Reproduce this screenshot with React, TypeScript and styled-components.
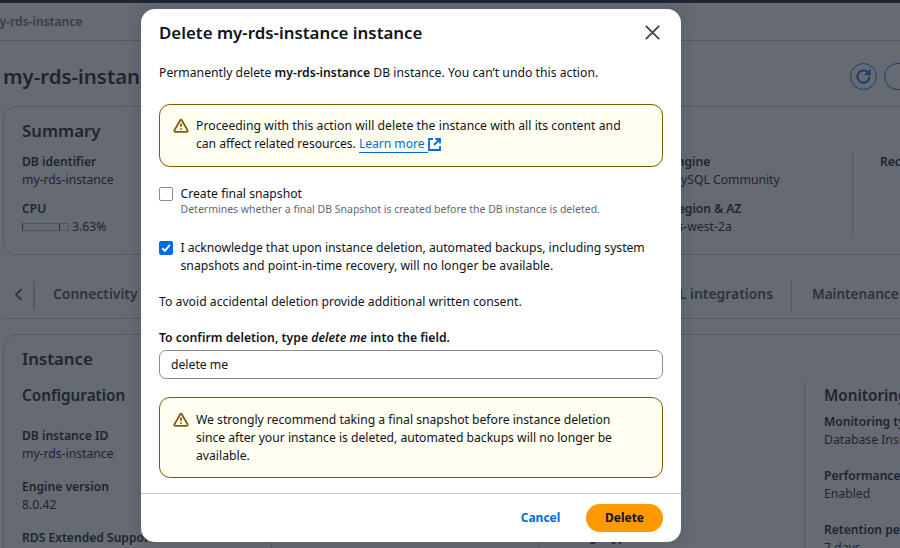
import React from "react";
import styled, { createGlobalStyle } from "styled-components";

const ink = "#0f141a";
const line = "#c6c6cd";
const blue = "#006ce0";

const GlobalStyle = createGlobalStyle`
  * { box-sizing: border-box; }
  body { margin: 0; overflow: hidden; background: #fff; }
  #root { height: 548px; }
`;

const Screen = styled.div`
  position: relative;
  width: 900px;
  height: 548px;
  overflow: hidden;
  background: #fff;
  color: ${ink};
  font: 400 12.2px/18px "Noto Sans", "Open Sans", sans-serif;
`;

/* Console page */

const Page = styled.div`
  height: 548px;
  overflow: hidden;
  white-space: nowrap;
`;

const TopBar = styled.div`
  height: 3px;
  background: #161d26;
`;

const Breadcrumbs = styled.nav`
  display: flex;
  align-items: center;
  height: 38px;
  padding-left: 3px;
  border-bottom: 1px solid ${line};
  color: #656871;
  font-size: 12.1px;
  font-weight: 600;
`;

const Crumb = styled.span`
  margin-left: -15px;
`;

const TitleRow = styled.header`
  display: flex;
  align-items: center;
  height: 65px;
  padding: 6px 0 0 3px;
`;

const PageTitle = styled.h1`
  flex: none;
  width: 847px;
  margin: 0 0 2px;
  font-size: 20.4px;
  line-height: 26px;
  font-weight: 600;
`;

const RoundButton = styled.button<{ $wide?: boolean }>`
  display: flex;
  flex: none;
  align-items: center;
  justify-content: center;
  width: ${(p) => (p.$wide ? "90px" : "27px")};
  height: 27px;
  margin-right: 7px;
  padding: 0;
  border: 1.4px solid ${blue};
  border-radius: 14px;
  background: transparent;
  color: ${blue};
`;

const Card = styled.section<{ $height: number }>`
  width: 1090px;
  height: ${(p) => p.$height}px;
  margin-left: 3px;
  padding: 13px 0 0 18px;
  border: 1px solid ${line};
  border-radius: 14px;
`;

const CardTitle = styled.h2`
  margin: 0;
  font-size: 16.8px;
  line-height: 22px;
  font-weight: 600;
`;

const SummaryGrid = styled.div`
  display: grid;
  grid-template-columns: 648px 182px 200px;
  margin-top: 10px;
`;

const SummaryColumn = styled.div<{ $ruled?: boolean }>`
  display: flex;
  flex-direction: column;
  gap: 11px;
  height: 83px;
  padding-top: 1px;
  padding-left: ${(p) => (p.$ruled ? "27px" : "0")};
  border-left: ${(p) => (p.$ruled ? `1px solid ${line}` : "0")};
`;

const FieldBox = styled.div`
  height: 36px;
`;

const FieldLabel = styled.div`
  font-size: 12.1px;
  font-weight: 600;
`;

const FieldValue = styled.div`
  display: flex;
  align-items: center;
  height: 18px;
`;

const Meter = styled.span`
  display: flex;
  justify-content: flex-end;
  width: 47px;
  height: 8px;
  margin-right: 3px;
  padding-right: 8px;
  border: 1px solid #b4b4bb;
  border-left-color: #424650;
`;

const MeterMark = styled.span`
  width: 1px;
  background: #db0000;
`;

const Tabs = styled.div`
  display: flex;
  align-items: center;
  height: 48px;
  margin: 16px 0 15px 3px;
  border-bottom: 1px solid ${line};
  color: #424650;
  font-size: 13.9px;
  font-weight: 600;
`;

const TabArrow = styled.span`
  display: flex;
  flex: none;
  align-items: center;
  width: 32px;
  height: 28px;
  padding-left: 11px;
  border-right: 2px solid ${line};
`;

const Tab = styled.span<{ $width: number; $end?: boolean }>`
  display: flex;
  flex: none;
  align-items: center;
  justify-content: ${(p) => (p.$end ? "flex-end" : "flex-start")};
  width: ${(p) => p.$width}px;
  height: 32px;
  padding: 0 18px 1px;
  border-right: ${(p) => (p.$end ? `1px solid ${line}` : "0")};
`;

const LastTab = styled(Tab)`
  padding-left: 20px;
  font-size: 13.6px;
`;

const DetailGrid = styled.div`
  display: grid;
  grid-template-columns: 249px 267px 266px 267px;
  margin-top: 12px;
`;

const DetailColumn = styled.div<{ $ruled?: boolean }>`
  height: 210px;
  padding-left: ${(p) => (p.$ruled ? "19px" : "0")};
  border-left: ${(p) => (p.$ruled ? `1px solid ${line}` : "0")};
`;

const DetailHeading = styled.h3<{ $gap: number }>`
  margin: 0 0 ${(p) => p.$gap}px;
  padding-top: 3px;
  font-size: 15.3px;
  line-height: 20px;
  font-weight: 600;
`;

const DetailList = styled.div<{ $gap: number; $top?: number }>`
  display: flex;
  flex-direction: column;
  gap: ${(p) => p.$gap}px;
  padding-top: ${(p) => p.$top ?? 0}px;
`;

/* Dialog */

const Backdrop = styled.div`
  position: absolute;
  inset: 0;
  padding: 9px 0 0 141px;
  background: rgba(35, 43, 55, 0.7);
`;

const Dialog = styled.div`
  display: flex;
  flex-direction: column;
  width: 540px;
  height: 533px;
  border-radius: 14px;
  background: #fff;
  box-shadow: 0 0 18px rgba(15, 20, 26, 0.14);
`;

const DialogHeader = styled.div`
  display: flex;
  align-items: center;
  justify-content: space-between;
  height: 48px;
  padding: 0 21px 0 18px;
`;

const CloseIcon = styled.svg`
  width: 15px;
  height: 15px;
  margin-bottom: 1px;
`;

const DialogTitle = styled.h2`
  margin: 0;
  font-size: 16.85px;
  line-height: 22px;
  font-weight: 600;
`;

const DialogBody = styled.div`
  flex: 1;
  padding: 7px 18px 0;
`;

const Paragraph = styled.p`
  margin: 0;
`;

const TextLine = styled.span<{ $track?: number }>`
  display: block;
  letter-spacing: ${(p) => p.$track ?? 0}px;
  white-space: nowrap;
`;

const Strong = styled.strong`
  font-size: 12.2px;
  font-weight: 600;
`;

const Alert = styled.div<{ $height: number; $top: number; $pad: number }>`
  display: flex;
  height: ${(p) => p.$height}px;
  margin-top: ${(p) => p.$top}px;
  padding: ${(p) => p.$pad}px 13px 0 13px;
  border: 1.5px solid #855900;
  border-radius: 11px;
  background: #fffef0;
`;

const AlertIcon = styled.svg`
  flex: none;
  width: 16px;
  height: 16px;
  margin: 0.5px 7px 0 0;
`;

const Link = styled.a`
  padding-right: 3px;
  border-bottom: 1px solid ${blue};
  color: ${blue};
`;

const LinkIcon = styled.svg`
  width: 13px;
  height: 13px;
  vertical-align: -3px;
`;

const CheckRow = styled.label<{ $top: number }>`
  display: flex;
  margin-top: ${(p) => p.$top}px;
`;

const CheckBox = styled.span<{ $checked?: boolean }>`
  display: flex;
  flex: none;
  width: 14px;
  height: 14px;
  margin: 2px 7.5px 0 0;
  border: 1px solid ${(p) => (p.$checked ? blue : "#8c8c94")};
  border-radius: 2px;
  background: ${(p) => (p.$checked ? blue : "#fff")};
`;

const Hint = styled.div`
  height: 14px;
  color: #656871;
  font-size: 10.5px;
  line-height: 12px;
`;

const ConsentText = styled.p`
  margin: 18px 0;
  letter-spacing: 0.02px;
`;

const InputLabel = styled.label`
  display: block;
  font-size: 12.2px;
  font-weight: 600;
  letter-spacing: 0.03px;
`;

const Input = styled.input`
  display: block;
  width: 504px;
  height: 29px;
  margin-top: 3px;
  padding: 0 11px;
  border: 1px solid #8c8c94;
  border-radius: 7px;
  color: ${ink};
  font: inherit;
  outline: none;
`;

const DialogFooter = styled.div`
  display: flex;
  align-items: center;
  justify-content: flex-end;
  height: 49px;
  padding-right: 18px;
  border-top: 1px solid ${line};
`;

const FooterButton = styled.button<{ $primary?: boolean }>`
  width: ${(p) => (p.$primary ? "77px" : "91px")};
  height: 28px;
  padding: 0;
  border: 0;
  border-radius: 14px;
  background: ${(p) => (p.$primary ? "#ff9900" : "transparent")};
  color: ${(p) => (p.$primary ? ink : blue)};
  font: 700 12px/18px "Noto Sans", "Open Sans", sans-serif;
`;

function Field({ label, children }: { label: string; children?: React.ReactNode }) {
  return (
    <FieldBox>
      <FieldLabel>{label}</FieldLabel>
      <FieldValue>{children}</FieldValue>
    </FieldBox>
  );
}

function Warning() {
  return (
    <AlertIcon viewBox="0 0 16 16" fill="none" stroke="#855900" strokeLinejoin="round">
      <path d="M7.2 2.2 Q8 1 8.8 2.2 L14.6 12.4 Q15 13.7 13.8 13.8 H2.2 Q1 13.7 1.4 12.4 Z" strokeWidth="1.8" />
      <path d="M8 5.6 V8.8 M8 10.2 V11.8" strokeWidth="1.8" />
    </AlertIcon>
  );
}

export default function App() {
  return (
    <Screen>
      <GlobalStyle />
      <Page>
        <TopBar />
        <Breadcrumbs>
          <Crumb>my-rds-instance</Crumb>
        </Breadcrumbs>
        <TitleRow>
          <PageTitle>my-rds-instance</PageTitle>
          <RoundButton>
            <svg width="15" height="15" viewBox="0 0 15 15" fill="none" stroke="currentColor" strokeWidth="2">
              <path d="M13.6 7.6 A6.1 6.1 0 1 1 11.8 3.2 L13.2 4.8" />
              <path d="M13.6 0.6 V5.2 H9" />
            </svg>
          </RoundButton>
          <RoundButton $wide />
        </TitleRow>

        <Card $height={149}>
          <CardTitle>Summary</CardTitle>
          <SummaryGrid>
            <SummaryColumn>
              <Field label="DB identifier">my-rds-instance</Field>
              <Field label="CPU">
                <Meter>
                  <MeterMark />
                </Meter>
                3.63%
              </Field>
            </SummaryColumn>
            <SummaryColumn>
              <Field label="Engine">MySQL Community</Field>
              <Field label="Region & AZ">us-west-2a</Field>
            </SummaryColumn>
            <SummaryColumn $ruled>
              <Field label="Recommendations" />
            </SummaryColumn>
          </SummaryGrid>
        </Card>

        <Tabs>
          <TabArrow>
            <svg width="9" height="13" viewBox="0 0 9 13" fill="none" stroke="currentColor" strokeWidth="1.8">
              <path d="M7.5 1.2 L2 6.5 L7.5 11.8" />
            </svg>
          </TabArrow>
          <Tab $width={380}>Connectivity</Tab>
          <Tab $width={377} $end>
            Zero-ETL integrations
          </Tab>
          <LastTab $width={300}>Maintenance</LastTab>
        </Tabs>

        <Card $height={260}>
          <CardTitle>Instance</CardTitle>
          <DetailGrid>
            <DetailColumn>
              <DetailHeading $gap={22}>Configuration</DetailHeading>
              <DetailList $gap={15}>
                <Field label="DB instance ID">my-rds-instance</Field>
                <Field label="Engine version">8.0.42</Field>
                <Field label="RDS Extended Support" />
              </DetailList>
            </DetailColumn>
            <DetailColumn $ruled />
            <DetailColumn $ruled>
              <DetailList $gap={15} $top={146}>
                <Field label="Storage type" />
              </DetailList>
            </DetailColumn>
            <DetailColumn $ruled>
              <DetailHeading $gap={8}>Monitoring</DetailHeading>
              <DetailList $gap={18}>
                <Field label="Monitoring type">Database Insights</Field>
                <Field label="Performance Insights">Enabled</Field>
                <Field label="Retention period">7 days</Field>
              </DetailList>
            </DetailColumn>
          </DetailGrid>
        </Card>
      </Page>

      <Backdrop>
        <Dialog role="dialog">
          <DialogHeader>
            <DialogTitle>Delete my-rds-instance instance</DialogTitle>
            <CloseIcon viewBox="0 0 15 15" fill="none" stroke="#424650" strokeWidth="1.9">
              <path d="M0.8 0.8 L14.2 14.2 M14.2 0.8 L0.8 14.2" />
            </CloseIcon>
          </DialogHeader>
          <DialogBody>
            <TextLine $track={0.02}>
              Permanently delete <Strong>my-rds-instance</Strong> DB instance. You can’t undo this action.
            </TextLine>
            <Alert $height={63} $top={22} $pad={12}>
              <Warning />
              <Paragraph>
                <TextLine $track={0.035}>
                  Proceeding with this action will delete the instance with all its content and
                </TextLine>
                <TextLine $track={-0.06}>
                  can affect related resources. <Link>Learn more</Link>
                  <LinkIcon viewBox="0 0 13 13" fill="none" stroke={blue} strokeWidth="1.8">
                    <path d="M5 1 H1 V12 H12 V8" />
                    <path d="M7.4 1 H12 V5.6 M12 1 L6 7" />
                  </LinkIcon>
                </TextLine>
              </Paragraph>
            </Alert>
            <CheckRow $top={18}>
              <CheckBox />
              <div>
                <TextLine>Create final snapshot</TextLine>
                <Hint>Determines whether a final DB Snapshot is created before the DB instance is deleted.</Hint>
              </div>
            </CheckRow>
            <CheckRow $top={22}>
              <CheckBox $checked>
                <svg width="12" height="12" viewBox="0 0 12 12" fill="none" stroke="#fff" strokeWidth="1.9">
                  <path d="M2.2 6.2 L4.9 8.8 L9.8 2.8" />
                </svg>
              </CheckBox>
              <div>
                <TextLine $track={-0.03}>
                  I acknowledge that upon instance deletion, automated backups, including system
                </TextLine>
                <TextLine $track={0.02}>
                  snapshots and point-in-time recovery, will no longer be available.
                </TextLine>
              </div>
            </CheckRow>
            <ConsentText>To avoid accidental deletion provide additional written consent.</ConsentText>
            <InputLabel>
              To confirm deletion, type <em>delete me</em> into the field.
            </InputLabel>
            <Input defaultValue="delete me" />
            <Alert $height={81} $top={18} $pad={13}>
              <Warning />
              <Paragraph>
                <TextLine $track={-0.02}>
                  We strongly recommend taking a final snapshot before instance deletion
                </TextLine>
                <TextLine $track={-0.02}>
                  since after your instance is deleted, automated backups will no longer be
                </TextLine>
                <TextLine>available.</TextLine>
              </Paragraph>
            </Alert>
          </DialogBody>
          <DialogFooter>
            <FooterButton>Cancel</FooterButton>
            <FooterButton $primary>Delete</FooterButton>
          </DialogFooter>
        </Dialog>
      </Backdrop>
    </Screen>
  );
}
